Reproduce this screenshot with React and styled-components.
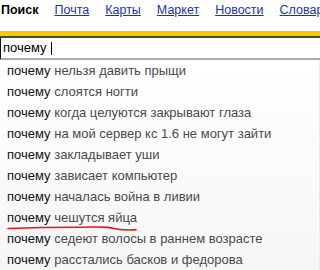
import React from "react";
import styled, { createGlobalStyle } from "styled-components";

const Global = createGlobalStyle`
  html, body { margin: 0; padding: 0; background: #fff; }
  body { width: 320px; height: 270px; overflow: hidden; font-family: "Liberation Sans", Arial, sans-serif; }
`;

const Page = styled.div`
  position: relative;
  width: 320px;
  height: 270px;
  overflow: hidden;
`;

const Nav = styled.nav`
  display: flex;
  align-items: baseline;
  gap: 16px;
  height: 31px;
  padding: 3px 0 0 1px;
  box-sizing: border-box;
  font-size: 12.5px;
  line-height: 15px;
  white-space: nowrap;
`;

const Current = styled.span`
  font-weight: bold;
  color: #000;
`;

const NavLink = styled.a`
  color: #1a31b8;
  text-decoration: underline;
  text-underline-offset: 1px;
`;

const YellowBar = styled.div`
  height: 5px;
  background: #fcc900;
  border-bottom: 2px solid #4b4b3a;
`;

const InputBox = styled.div`
  height: 20px;
  border-left: 1px solid #111;
  border-bottom: 2px solid #ababab;
  padding: 0 0 0 2px;
  font-size: 13px;
  line-height: 20px;
  color: #000;
  display: flex;
  align-items: center;
`;

const Caret = styled.span`
  display: inline-block;
  width: 1px;
  height: 13px;
  background: #000;
  margin-left: 4px;
`;

const List = styled.ul`
  list-style: none;
  margin: 0;
  padding: 0;
  background: linear-gradient(to bottom, #ffffff 0%, #f6f6f6 100%);
  border-right: 1px solid #ececec;
`;

const Item = styled.li`
  height: 21px;
  line-height: 21px;
  padding-left: 7px;
  font-size: 13px;
  color: #4a4a4a;
  white-space: nowrap;
`;

const Typed = styled.span`
  color: #111;
`;

const Scribble = styled.svg`
  position: absolute;
  left: 0;
  top: 220px;
  pointer-events: none;
`;

const links = ["Почта", "Карты", "Маркет", "Новости", "Словари"];
const items = [
  "нельзя давить прыщи",
  "слоятся ногти",
  "когда целуются закрывают глаза",
  "на мой сервер кс 1.6 не могут зайти",
  "закладывает уши",
  "зависает компьютер",
  "началась война в ливии",
  "чешутся яйца",
  "седеют волосы в раннем возрасте",
  "расстались басков и федорова",
];

export default function App() {
  return (
    <Page>
      <Global />
      <Nav>
        <Current>Поиск</Current>
        {links.map((l) => (
          <NavLink key={l} href="#">{l}</NavLink>
        ))}
      </Nav>
      <YellowBar />
      <InputBox>
        почему<Caret />
      </InputBox>
      <List>
        {items.map((t) => (
          <Item key={t}>
            <Typed>почему</Typed> {t}
          </Item>
        ))}
      </List>
      <Scribble width="160" height="16" viewBox="0 0 160 16">
        <path
          d="M8 8.5 C30 7.6 60 7.2 80 7.2 C92 7.2 100 6.4 108 7.4 C114 8.2 118 9.6 124 9.8 C128 10 132 10 136 9.6"
          fill="none"
          stroke="#e8141b"
          strokeWidth="1.6"
          strokeLinecap="round"
        />
      </Scribble>
    </Page>
  );
}
